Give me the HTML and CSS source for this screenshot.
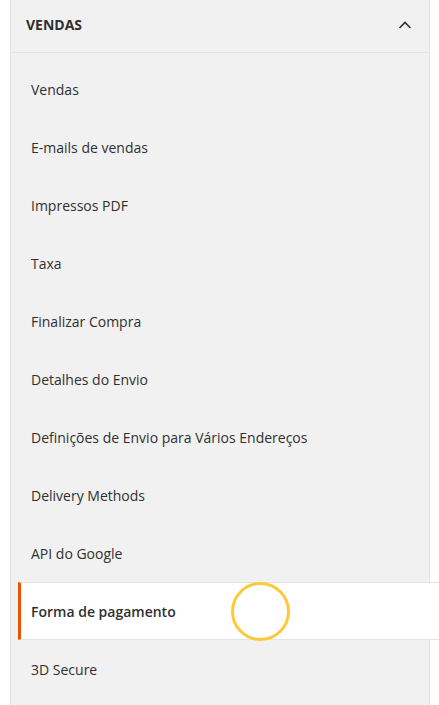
FILE: index.html
```html
<!DOCTYPE html>
<html lang="pt-BR">
<head>
  <meta charset="UTF-8">
  <title>Configuração - Vendas</title>
  <link rel="stylesheet" href="styles.css">
</head>
<body>
  <div class="nav-panel">
    <div class="nav-title">
      <span>Vendas</span>
      <svg class="chevron" width="14" height="8" viewBox="0 0 14 8">
        <path d="M1.5 7 L7 1.5 L12.5 7" fill="none" stroke="#303030" stroke-width="1.6"/>
      </svg>
    </div>
    <ul class="nav-items">
      <li class="nav-item">Vendas</li>
      <li class="nav-item">E-mails de vendas</li>
      <li class="nav-item">Impressos PDF</li>
      <li class="nav-item">Taxa</li>
      <li class="nav-item">Finalizar Compra</li>
      <li class="nav-item">Detalhes do Envio</li>
      <li class="nav-item">Definições de Envio para Vários Endereços</li>
      <li class="nav-item">Delivery Methods</li>
      <li class="nav-item">API do Google</li>
      <li class="nav-item active">Forma de pagamento<span class="tap"></span></li>
      <li class="nav-item">3D Secure</li>
    </ul>
  </div>
</body>
</html>
```

FILE: styles.css
```css
body {
  margin: 0;
  background: #fff;
  color: #303030;
  font-family: 'Open Sans', 'Liberation Sans', sans-serif;
  font-size: 14px;
  overflow: hidden;
}
.nav-panel {
  margin-left: 10px;
  width: 418px;
  min-height: 705px;
  background: #f1f1f1;
  border-left: 1px solid #e3e3e3;
  border-right: 1px solid #e3e3e3;
}
.nav-title {
  display: flex;
  align-items: center;
  justify-content: space-between;
  height: 53px;
  padding: 0 17px 0 15px;
  border-bottom: 1px solid #e3e3e3;
  font-weight: 700;
  text-transform: uppercase;
  line-height: 20px;
  box-sizing: border-box;
}
.nav-title span { margin-top: -3px; }
.chevron { margin-top: -3px; }
.nav-items {
  list-style: none;
  margin: 0;
  padding: 7px 0 0 7px;
}
.nav-item {
  position: relative;
  height: 58px;
  box-sizing: border-box;
  padding: 19px 0 17px 13px;
  line-height: 20px;
  border-top: 1px solid transparent;
  border-bottom: 1px solid transparent;
}
.nav-item.active {
  margin-right: -12px;
  background: #fff;
  border-top-color: #e3e3e3;
  border-bottom-color: #e3e3e3;
  border-left: 3px solid #eb5202;
  padding-left: 10px;
  font-weight: 600;
}
.tap {
  position: absolute;
  left: 210px;
  top: -1px;
  width: 53px;
  height: 53px;
  border: 3px solid #fdc934;
  border-radius: 50%;
}
```
